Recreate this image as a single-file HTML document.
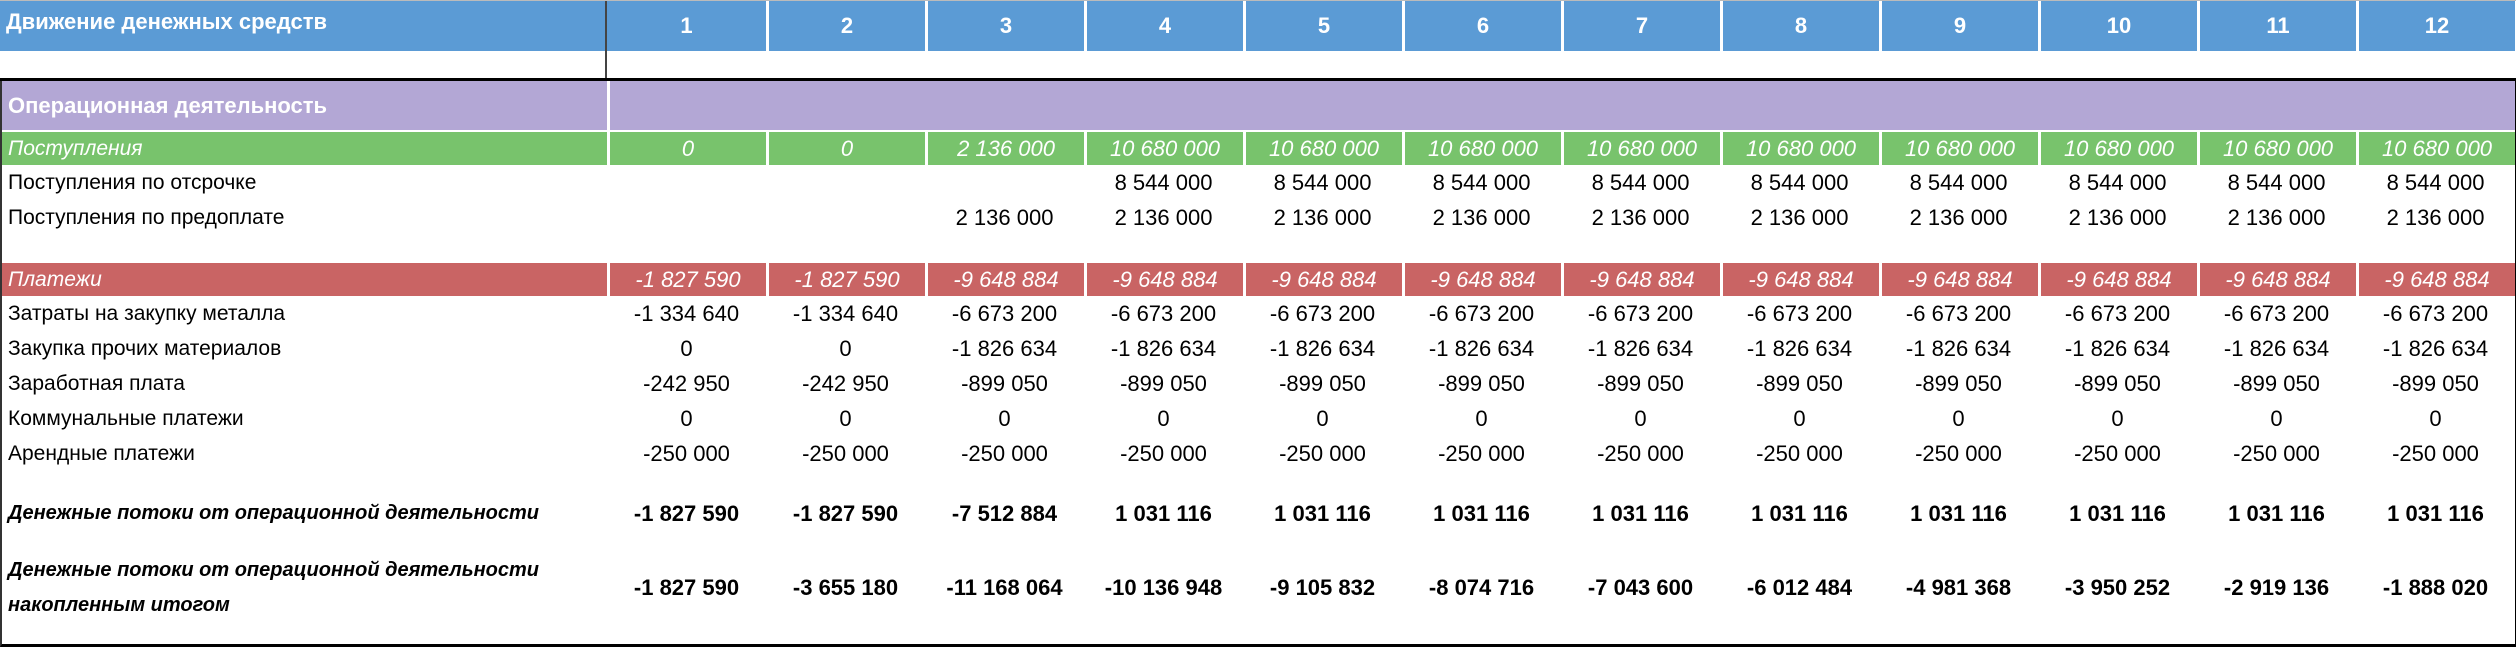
<!DOCTYPE html>
<html><head><meta charset="utf-8"><style>
*{margin:0;padding:0;box-sizing:border-box}
body{width:2516px;height:647px;background:#fff;font-family:"Liberation Sans","DejaVu Sans",sans-serif;position:relative;overflow:hidden;color:#000}
table{position:absolute;left:0;top:1px;border-collapse:separate;border-spacing:0;table-layout:fixed;width:2516px}
td{font-size:22px;text-align:center;white-space:nowrap;padding:0;vertical-align:middle;overflow:hidden}
td.l{text-align:left;padding-left:6px;font-size:21px}
tr.h td{background:#5B9BD5;color:#fff;font-weight:bold;height:50px;font-size:22px}
tr.h td+td{border-left:3px solid #fff}
tr.h td.l{border-right:2px solid #444}
tr.h td.l+td{border-left:0}
tr.g td,tr.r td{color:#fff;font-style:italic;height:33px}
tr.g td{background:#78C36C}
tr.r td{background:#C96464}
tr.g td+td,tr.r td+td{border-left:3px solid #fff}
tr.n td{height:35px}
tr.b td{font-weight:bold;height:35px}
.top{position:absolute;left:0;top:0;width:2516px;height:1px;background:#bbb}
</style></head><body>
<div class="top"></div>
<table>
<colgroup><col style="width:607px"><col span="12" style="width:159px"><col style="width:2px"></colgroup>
<tr class="h"><td class="l" style="text-align:left;padding-bottom:8px;font-size:22px">Движение денежных средств</td><td>1</td><td>2</td><td>3</td><td>4</td><td>5</td><td>6</td><td>7</td><td>8</td><td>9</td><td>10</td><td>11</td><td>12</td><td style="background:#fff;border:0"></td></tr>
<tr><td style="height:27px;border-right:2px solid #444"></td><td colspan="13"></td></tr>
<tr><td colspan="14" style="height:3px;background:#000"></td></tr>
<tr><td class="l" style="background:#B3A7D5;color:#fff;font-weight:bold;height:49px;font-size:22px;border-left:2px solid #333">Операционная деятельность</td><td colspan="12" style="background:#B3A7D5;border-left:3px solid #fff"></td><td style="background:#000"></td></tr>
<tr><td colspan="14" style="height:2px;border-left:2px solid #333;border-right:2px solid #000"></td></tr>
<tr class="g"><td class="l" style="border-left:2px solid #333">Поступления</td><td>0</td><td>0</td><td>2 136 000</td><td>10 680 000</td><td>10 680 000</td><td>10 680 000</td><td>10 680 000</td><td>10 680 000</td><td>10 680 000</td><td>10 680 000</td><td>10 680 000</td><td>10 680 000</td><td style="background:#000;border:0"></td></tr>
<tr class="n"><td class="l" style="border-left:2px solid #333">Поступления по отсрочке</td><td></td><td></td><td></td><td>8 544 000</td><td>8 544 000</td><td>8 544 000</td><td>8 544 000</td><td>8 544 000</td><td>8 544 000</td><td>8 544 000</td><td>8 544 000</td><td>8 544 000</td><td style="background:#000"></td></tr>
<tr class="n"><td class="l" style="border-left:2px solid #333">Поступления по предоплате</td><td></td><td></td><td>2 136 000</td><td>2 136 000</td><td>2 136 000</td><td>2 136 000</td><td>2 136 000</td><td>2 136 000</td><td>2 136 000</td><td>2 136 000</td><td>2 136 000</td><td>2 136 000</td><td style="background:#000"></td></tr>
<tr><td colspan="13" style="height:28px;border-left:2px solid #333"></td><td style="background:#000"></td></tr>
<tr class="r"><td class="l" style="border-left:2px solid #333">Платежи</td><td>-1 827 590</td><td>-1 827 590</td><td>-9 648 884</td><td>-9 648 884</td><td>-9 648 884</td><td>-9 648 884</td><td>-9 648 884</td><td>-9 648 884</td><td>-9 648 884</td><td>-9 648 884</td><td>-9 648 884</td><td>-9 648 884</td><td style="background:#000;border:0"></td></tr>
<tr class="n"><td class="l" style="border-left:2px solid #333">Затраты на закупку металла</td><td>-1 334 640</td><td>-1 334 640</td><td>-6 673 200</td><td>-6 673 200</td><td>-6 673 200</td><td>-6 673 200</td><td>-6 673 200</td><td>-6 673 200</td><td>-6 673 200</td><td>-6 673 200</td><td>-6 673 200</td><td>-6 673 200</td><td style="background:#000"></td></tr>
<tr class="n"><td class="l" style="border-left:2px solid #333">Закупка прочих материалов</td><td>0</td><td>0</td><td>-1 826 634</td><td>-1 826 634</td><td>-1 826 634</td><td>-1 826 634</td><td>-1 826 634</td><td>-1 826 634</td><td>-1 826 634</td><td>-1 826 634</td><td>-1 826 634</td><td>-1 826 634</td><td style="background:#000"></td></tr>
<tr class="n"><td class="l" style="border-left:2px solid #333">Заработная плата</td><td>-242 950</td><td>-242 950</td><td>-899 050</td><td>-899 050</td><td>-899 050</td><td>-899 050</td><td>-899 050</td><td>-899 050</td><td>-899 050</td><td>-899 050</td><td>-899 050</td><td>-899 050</td><td style="background:#000"></td></tr>
<tr class="n"><td class="l" style="border-left:2px solid #333">Коммунальные платежи</td><td>0</td><td>0</td><td>0</td><td>0</td><td>0</td><td>0</td><td>0</td><td>0</td><td>0</td><td>0</td><td>0</td><td>0</td><td style="background:#000"></td></tr>
<tr class="n"><td class="l" style="border-left:2px solid #333">Арендные платежи</td><td>-250 000</td><td>-250 000</td><td>-250 000</td><td>-250 000</td><td>-250 000</td><td>-250 000</td><td>-250 000</td><td>-250 000</td><td>-250 000</td><td>-250 000</td><td>-250 000</td><td>-250 000</td><td style="background:#000"></td></tr>
<tr><td colspan="13" style="height:25px;border-left:2px solid #333"></td><td style="background:#000"></td></tr>
<tr class="b"><td class="l" style="border-left:2px solid #333;font-style:italic;font-size:20px">Денежные потоки от операционной деятельности</td><td>-1 827 590</td><td>-1 827 590</td><td>-7 512 884</td><td>1 031 116</td><td>1 031 116</td><td>1 031 116</td><td>1 031 116</td><td>1 031 116</td><td>1 031 116</td><td>1 031 116</td><td>1 031 116</td><td>1 031 116</td><td style="background:#000"></td></tr>
<tr><td colspan="13" style="height:20px;border-left:2px solid #333"></td><td style="background:#000"></td></tr>
<tr class="b"><td class="l" style="border-left:2px solid #333;font-style:italic;font-size:20px;line-height:35px;height:74px">Денежные потоки от операционной деятельности<br>накопленным итогом</td><td>-1 827 590</td><td>-3 655 180</td><td>-11 168 064</td><td>-10 136 948</td><td>-9 105 832</td><td>-8 074 716</td><td>-7 043 600</td><td>-6 012 484</td><td>-4 981 368</td><td>-3 950 252</td><td>-2 919 136</td><td>-1 888 020</td><td style="background:#000"></td></tr>
<tr><td colspan="13" style="height:22px;border-left:2px solid #333;border-bottom:3px solid #000"></td><td style="background:#000"></td></tr>
</table>
</body></html>
